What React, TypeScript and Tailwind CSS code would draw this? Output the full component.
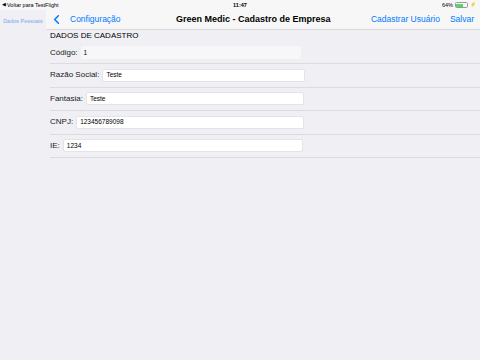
import { ChevronLeft } from "lucide-react";

const fields = [
  { label: "Código", value: "1", w: "w-[220px]", disabled: true },
  { label: "Razão Social", value: "Teste", w: "w-[203px]" },
  { label: "Fantasia", value: "Teste", w: "w-[218px]" },
  { label: "CNPJ", value: "123456789098", w: "w-[228px]" },
  { label: "IE", value: "1234", w: "w-[240px]" },
];

export default function App() {
  return (
    <div className="w-[480px] h-[360px] bg-[#efeff4] flex flex-col font-['Liberation_Sans',Arial,sans-serif] overflow-hidden">
      {/* status bar */}
      <div className="h-[10px] bg-[#f7f7f7] flex items-center justify-between px-[2px] text-[5.5px] text-black">
        <div className="w-[120px] flex items-center">
          <span className="text-[5px] mr-[1px]">◀</span>Voltar para TestFlight
        </div>
        <div className="font-bold">11:47</div>
        <div className="w-[120px] flex items-center justify-end gap-[2px] pr-[2px]">
          <span>64%</span>
          <div className="w-[13px] h-[6px] border border-[#999] rounded-[1.5px] p-[0.5px] flex">
            <div className="w-[7px] h-full bg-[#4cd964] rounded-[0.5px]" />
          </div>
          <span className="text-[5px]">⚡</span>
        </div>
      </div>
      <div className="flex flex-1">
        {/* sidebar */}
        <div className="w-[46px] bg-[#efeff4] pt-[7px] flex justify-center">
          <span className="text-[5.5px] text-[#7fa8e8]">Dados Pessoais</span>
        </div>
        <div className="flex-1 flex flex-col">
          {/* nav bar */}
          <div className="h-[20px] bg-[#f7f7f7] border-b border-[#d8d8dc] flex items-center relative text-[8.5px]">
            <div className="flex items-center text-[#007aff] pl-[3px]">
              <ChevronLeft size={15} strokeWidth={2.5} />
              <span className="ml-[6px]">Configuração</span>
            </div>
            <div className="absolute left-[130px] text-[9px] font-bold text-black">Green Medic - Cadastro de Empresa</div>
            <div className="ml-auto flex items-center gap-[10px] pr-[6px] text-[#007aff]">
              <span>Cadastrar Usuário</span>
              <span>Salvar</span>
            </div>
          </div>
          <div className="pl-[4px]">
            <div className="h-[12px] flex items-center text-[8px] text-black">DADOS DE CADASTRO</div>
            {fields.map((f, i) => (
              <div
                key={f.label}
                className={`flex items-center border-b border-[#dcdce0] ${i === 0 ? "h-[22px]" : "h-[23.5px]"}`}
              >
                <span className="text-[8px] text-[#222] mr-[3px]">{f.label}:</span>
                <div
                  className={`${f.w} h-[13px] rounded-[2px] flex items-center px-[3px] text-[6.5px] text-black ${
                    f.disabled ? "bg-[#f7f7f9]" : "bg-white border border-[#e4e4e8]"
                  }`}
                >
                  {f.value}
                </div>
              </div>
            ))}
          </div>
        </div>
      </div>
    </div>
  );
}
